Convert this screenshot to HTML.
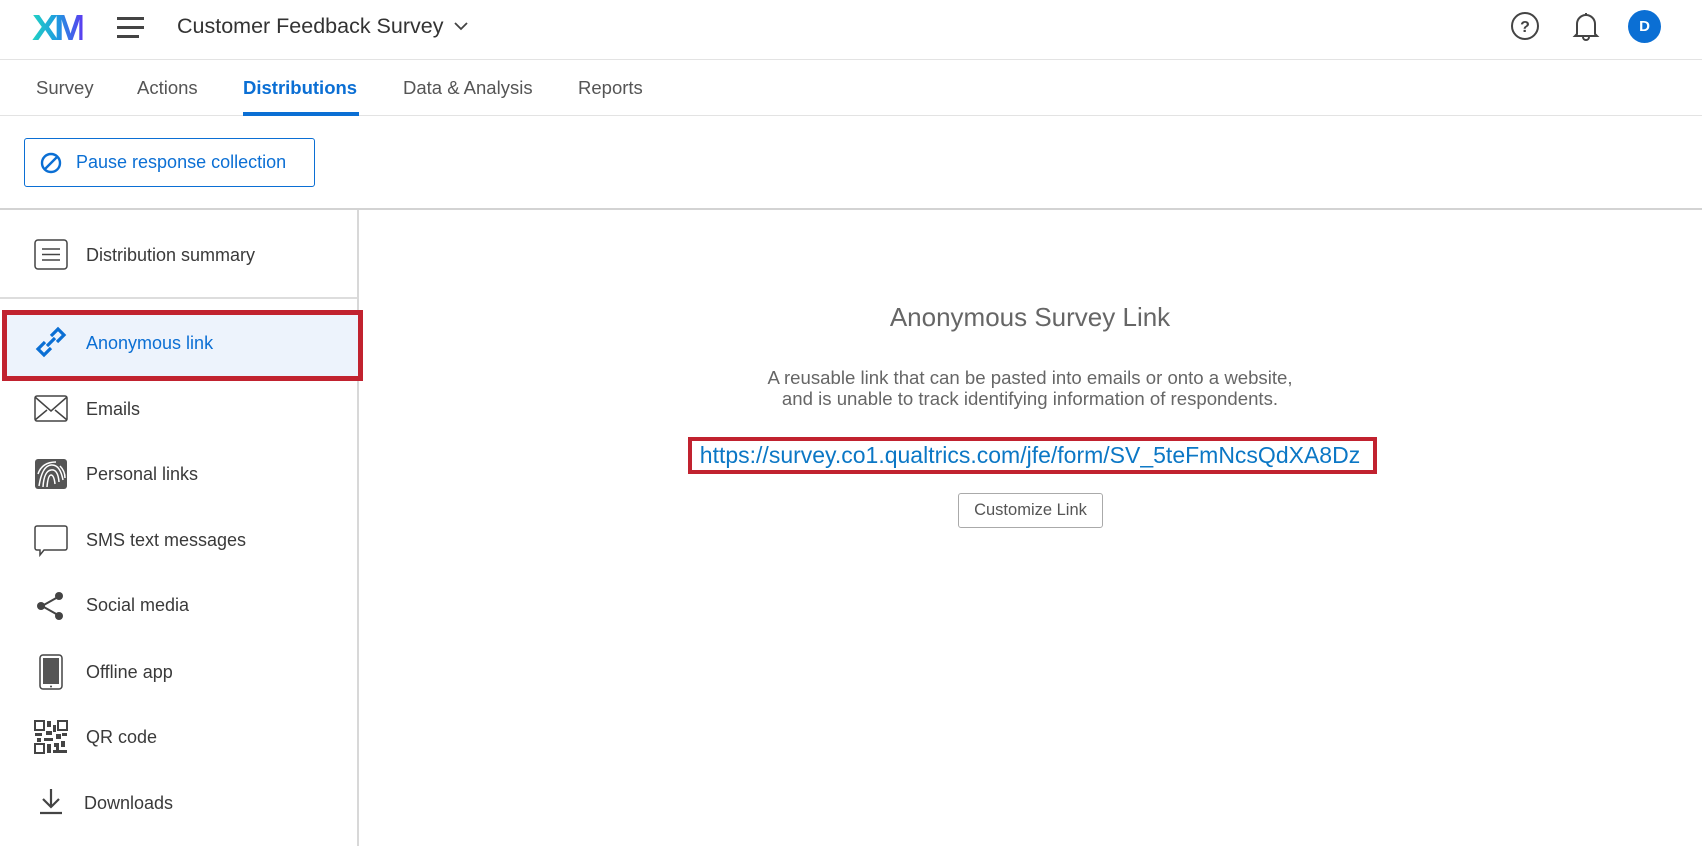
<!DOCTYPE html>
<html><head><meta charset="utf-8"><style>
*{box-sizing:border-box;margin:0;padding:0}
body{width:1702px;height:846px;background:#fff;font-family:"Liberation Sans",sans-serif;color:#333;position:relative;overflow:hidden}
.abs{position:absolute}
.hdr{left:0;top:0;width:1702px;height:60px;border-bottom:1px solid #e3e3e3}
.tabs{left:0;top:60px;width:1702px;height:56px;border-bottom:1px solid #e3e3e3}
.tab{position:absolute;top:17px;font-size:18.5px;color:#555}
.side{font-size:18px;color:#3a3a3a;position:absolute;left:86px;line-height:22px}
.ic{position:absolute;left:34px}
.c{position:absolute;left:358px;width:1344px;text-align:center}
</style></head><body>
<div class="abs hdr">
 <div class="abs" style="left:32px;top:7px;font-size:36px;font-weight:bold;letter-spacing:-4px;transform:scaleX(1.1);transform-origin:left;background:linear-gradient(90deg,#21d3c3,#1f9ae0 50%,#5b3df0);-webkit-background-clip:text;color:transparent">XM</div>
 <div class="abs" style="left:117px;top:17px;width:27px;height:3px;background:#444"></div>
 <div class="abs" style="left:117px;top:26px;width:27px;height:3px;background:#444"></div>
 <div class="abs" style="left:117px;top:35px;width:22px;height:3px;background:#444"></div>
 <div class="abs" style="left:177px;top:14px;font-size:21.5px;color:#333">Customer Feedback Survey</div>
 <svg class="abs" style="left:453px;top:20px" width="16" height="12"><path d="M2 3l6 6 6-6" fill="none" stroke="#444" stroke-width="1.8"/></svg>
 <svg class="abs" style="left:1510px;top:11px" width="30" height="30"><circle cx="15" cy="15" r="13" fill="none" stroke="#444" stroke-width="2"/><text x="15" y="21" font-size="16" font-weight="bold" text-anchor="middle" fill="#444" font-family="Liberation Sans">?</text></svg>
 <svg class="abs" style="left:1572px;top:10px" width="28" height="32"><path d="M5 24V14a9 9 0 0 1 18 0v10l2 2H3z M14 5V3 M11 27a3 3 0 0 0 6 0" fill="none" stroke="#444" stroke-width="2"/></svg>
 <div class="abs" style="left:1628px;top:10px;width:33px;height:33px;border-radius:50%;background:#0b6fd4;color:#fff;font-size:15px;font-weight:bold;text-align:center;line-height:33px">D</div>
</div>
<div class="abs tabs">
 <div class="tab" style="left:36px">Survey</div>
 <div class="tab" style="left:137px">Actions</div>
 <div class="tab" style="left:243px;color:#0b6fd4;font-weight:bold">Distributions</div>
 <div class="abs" style="left:243px;top:52px;width:116px;height:4px;background:#0b6fd4"></div>
 <div class="tab" style="left:403px">Data &amp; Analysis</div>
 <div class="tab" style="left:578px">Reports</div>
</div>
<div class="abs" style="left:24px;top:138px;width:291px;height:49px;border:1px solid #0b6fd4;border-radius:3px"></div>
<svg class="abs" style="left:40px;top:152px" width="22" height="22"><circle cx="11" cy="11" r="9" fill="none" stroke="#0b6fd4" stroke-width="2.4"/><path d="M5 17L17 5" stroke="#0b6fd4" stroke-width="2.4"/></svg>
<div class="abs" style="left:76px;top:152px;font-size:18px;color:#0b6fd4">Pause response collection</div>
<div class="abs" style="left:0;top:208px;width:1702px;height:2px;background:#d3d3d3"></div>
<div class="abs" style="left:357px;top:210px;width:2px;height:636px;background:#d8d8d8"></div>

<svg class="ic" style="top:239px" width="34" height="32"><rect x="1" y="1" width="32" height="29" rx="3" fill="none" stroke="#444" stroke-width="1.5"/><path d="M8 10h18M8 15.5h18M8 21h18" stroke="#444" stroke-width="1.5"/></svg>
<div class="side" style="top:244px">Distribution summary</div>
<div class="abs" style="left:0;top:297px;width:357px;height:2px;background:#ddd"></div>

<div class="abs" style="left:2px;top:310px;width:361px;height:71px;border:5px solid #c1222f;background:#edf3fc"></div>
<svg class="ic" style="top:326px" width="34" height="32"><path d="M11 16l-7 7 6 6 7-7 M23 16l7-7-6-6-7 7 M13 20l8-8" fill="none" stroke="#0b6fd4" stroke-width="3.2"/></svg>
<div class="side" style="top:332px;color:#0b6fd4">Anonymous link</div>

<svg class="ic" style="top:395px" width="34" height="28"><rect x="1" y="1" width="32" height="25" rx="2" fill="none" stroke="#444" stroke-width="1.5"/><path d="M1 2l16 14 16-14M1 25l12-10M33 25l-12-10" fill="none" stroke="#444" stroke-width="1.5"/></svg>
<div class="side" style="top:398px">Emails</div>

<svg class="ic" style="top:458px" width="34" height="32"><rect x="1" y="1" width="32" height="30" rx="3" fill="#555"/><path d="M5 28Q8 8 17 7T29 22M9 29Q10 13 17 12T25 24M13 29Q14 17 17 17T21 26M4 16Q8 4 22 4M26 8Q31 13 31 20" fill="none" stroke="#fff" stroke-width="1.5"/></svg>
<div class="side" style="top:463px">Personal links</div>

<svg class="ic" style="top:525px" width="34" height="32"><path d="M3 1h28a2 2 0 0 1 2 2v20a2 2 0 0 1-2 2H10l-4 5v-5H3a2 2 0 0 1-2-2V3a2 2 0 0 1 2-2z" fill="none" stroke="#444" stroke-width="1.5"/></svg>
<div class="side" style="top:529px">SMS text messages</div>

<svg class="ic" style="top:590px" width="34" height="32"><path d="M8 16L24 7M8 16l16 9" stroke="#444" stroke-width="2"/><circle cx="7" cy="16" r="4" fill="#444"/><circle cx="25" cy="6" r="4" fill="#444"/><circle cx="25" cy="26" r="4" fill="#444"/></svg>
<div class="side" style="top:594px">Social media</div>

<svg class="ic" style="top:654px" width="34" height="36"><rect x="6" y="1" width="22" height="34" rx="3" fill="none" stroke="#444" stroke-width="1.5"/><rect x="9" y="4" width="16" height="26" fill="#555"/><circle cx="17" cy="32.5" r="1" fill="#444"/></svg>
<div class="side" style="top:661px">Offline app</div>

<svg class="ic" style="top:720px" width="34" height="34" fill="#444"><rect x="1" y="1" width="9" height="9" fill="none" stroke="#444" stroke-width="2"/><rect x="24" y="1" width="9" height="9" fill="none" stroke="#444" stroke-width="2"/><rect x="1" y="24" width="9" height="9" fill="none" stroke="#444" stroke-width="2"/><rect x="13" y="1" width="4" height="6"/><rect x="19" y="5" width="3" height="7"/><rect x="12" y="11" width="6" height="4"/><rect x="1" y="13" width="7" height="3"/><rect x="3" y="18" width="4" height="4"/><rect x="10" y="18" width="9" height="3"/><rect x="22" y="14" width="5" height="5"/><rect x="28" y="13" width="5" height="3"/><rect x="13" y="24" width="4" height="9"/><rect x="20" y="23" width="5" height="4"/><rect x="27" y="21" width="4" height="6"/><rect x="19" y="30" width="14" height="3"/><rect x="22" y="27" width="3" height="3"/></svg>
<div class="side" style="top:726px">QR code</div>

<svg class="ic" style="top:786px" width="34" height="30"><path d="M17 3v18M9 13l8 8 8-8M6 27h22" fill="none" stroke="#444" stroke-width="2.2"/></svg>
<div class="side" style="top:792px;left:84px">Downloads</div>

<div class="c" style="top:302px;font-size:26px;color:#666">Anonymous Survey Link</div>
<div class="c" style="top:367px;font-size:18.6px;color:#666;line-height:21px">A reusable link that can be pasted into emails or onto a website,<br>and is unable to track identifying information of respondents.</div>
<div class="abs" style="left:688px;top:437px;width:689px;height:37px;border:4px solid #c1222f"></div>
<div class="c" style="top:442px;font-size:23px;color:#0b77c5">https://survey.co1.qualtrics.com/jfe/form/SV_5teFmNcsQdXA8Dz</div>
<div class="abs" style="left:958px;top:493px;width:145px;height:35px;border:1px solid #aaa;border-radius:3px;font-size:16.5px;color:#555;text-align:center;line-height:33px">Customize Link</div>
</body></html>
